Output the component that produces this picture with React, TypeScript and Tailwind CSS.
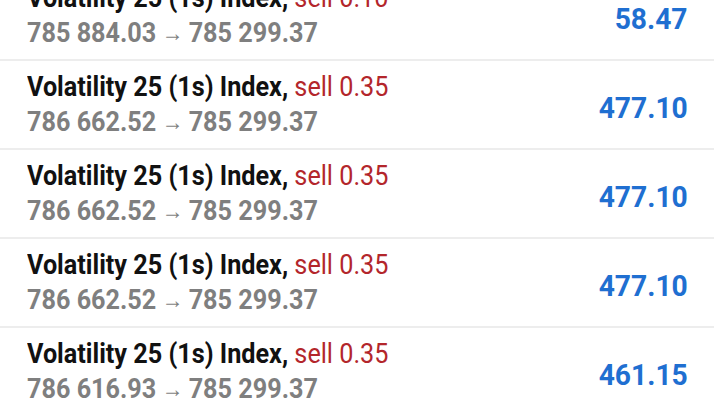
const rows = [
  { side: "sell", vol: "0.10", from: "785 884.03", to: "785 299.37", profit: "58.47" },
  { side: "sell", vol: "0.35", from: "786 662.52", to: "785 299.37", profit: "477.10" },
  { side: "sell", vol: "0.35", from: "786 662.52", to: "785 299.37", profit: "477.10" },
  { side: "sell", vol: "0.35", from: "786 662.52", to: "785 299.37", profit: "477.10" },
  { side: "sell", vol: "0.35", from: "786 616.93", to: "785 299.37", profit: "461.15" },
];

export default function App() {
  return (
    <div className="w-[714px] h-[402px] overflow-hidden bg-white font-['Roboto',sans-serif]">
      <div className="-mt-[28px]">
        {rows.map((r, i) => (
          <div
            key={i}
            className="h-[89px] flex items-center justify-between pl-[27px] pr-[26px] border-b-2 border-[#ededed]"
          >
            {/* condensed look: Roboto squeezed horizontally */}
            <div className="flex flex-col leading-[35px] text-[28px] scale-x-[0.9] origin-left">
              <div className="whitespace-nowrap">
                <span className="font-bold text-[#111]">Volatility 25 (1s) Index,</span>{" "}
                <span className="text-[#b3262b]">
                  {r.side} {r.vol}
                </span>
              </div>
              <div className="whitespace-nowrap font-bold text-[#7f7f7f]">
                {r.from}
                <span className="inline-block px-[6px] text-[24px] font-normal -translate-y-[1px]">→</span>
                {r.to}
              </div>
            </div>
            <div className="mt-[5px] text-[30px] font-bold text-[#1f6fd1] scale-x-[0.94] origin-right">
              {r.profit}
            </div>
          </div>
        ))}
      </div>
    </div>
  );
}
